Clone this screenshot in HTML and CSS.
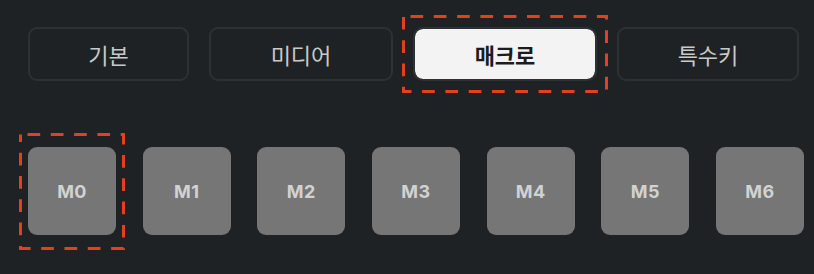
FILE: index.html
```html
<!DOCTYPE html>
<html lang="ko">
<head>
<meta charset="utf-8">
<link rel="stylesheet" href="styles.css">
</head>
<body>
<div class="panel">
  <div class="tabs">
    <button class="tab tab-basic">기본</button>
    <button class="tab tab-media">미디어</button>
    <button class="tab tab-macro active">매크로
      <svg class="focus focus-tab" width="206" height="78" aria-hidden="true">
        <rect x="1.5" y="1.5" width="203" height="75" fill="none" stroke="#e4401d" stroke-width="3" stroke-dasharray="12.7 10.6" stroke-dashoffset="-7"/>
      </svg>
    </button>
    <button class="tab tab-special">특수키</button>
  </div>
  <div class="keys">
    <button class="key selected">M0
      <svg class="focus focus-key" width="106" height="117" aria-hidden="true">
        <rect x="1.5" y="1.5" width="103" height="114" fill="none" stroke="#e4401d" stroke-width="3" stroke-dasharray="12.7 10.6" stroke-dashoffset="-7"/>
      </svg>
    </button>
    <button class="key">M1</button>
    <button class="key">M2</button>
    <button class="key">M3</button>
    <button class="key">M4</button>
    <button class="key">M5</button>
    <button class="key">M6</button>
  </div>
</div>
</body>
</html>
```

FILE: styles.css
```css
html, body {
  margin: 0;
  padding: 0;
  background: #1f2224;
  width: 814px;
  height: 274px;
  overflow: hidden;
}

.panel {
  display: flex;
  flex-direction: column;
  padding: 27px 0 0 28px;
}

.tabs {
  display: flex;
  gap: 20px;
  height: 54px;
}

.tab {
  position: relative;
  box-sizing: border-box;
  height: 54px;
  margin: 0;
  padding: 0;
  border: 2px solid #2d3133;
  border-radius: 9px;
  background: #1f2224;
  color: #c9c9c9;
  font-family: "Noto Sans CJK KR", "Noto Sans", sans-serif;
  font-size: 22px;
  font-weight: 400;
  display: flex;
  align-items: center;
  justify-content: center;
  cursor: pointer;
}

.tab-basic { width: 161px; }
.tab-media { width: 184px; }
.tab-macro { width: 184px; }
.tab-special { width: 182px; }

.tab.active {
  background: #f3f3f3;
  background-clip: padding-box;
  color: #1c1c1c;
  font-weight: 700;
  border-radius: 10px;
}

.keys {
  display: flex;
  gap: 26.67px;
  margin-top: 66px;
}

.key {
  position: relative;
  box-sizing: border-box;
  width: 88px;
  height: 88px;
  margin: 0;
  padding: 0;
  border: none;
  border-radius: 9px;
  background: #767676;
  color: #d2d2d2;
  font-family: Inter, "Liberation Sans", sans-serif;
  font-size: 18px;
  font-weight: 700;
  letter-spacing: 0.4px;
  display: flex;
  align-items: center;
  justify-content: center;
  cursor: pointer;
}

.focus {
  position: absolute;
  pointer-events: none;
}

.focus-tab {
  left: -13px;
  top: -14px;
}

.focus-key {
  left: -9px;
  top: -14px;
}
```
